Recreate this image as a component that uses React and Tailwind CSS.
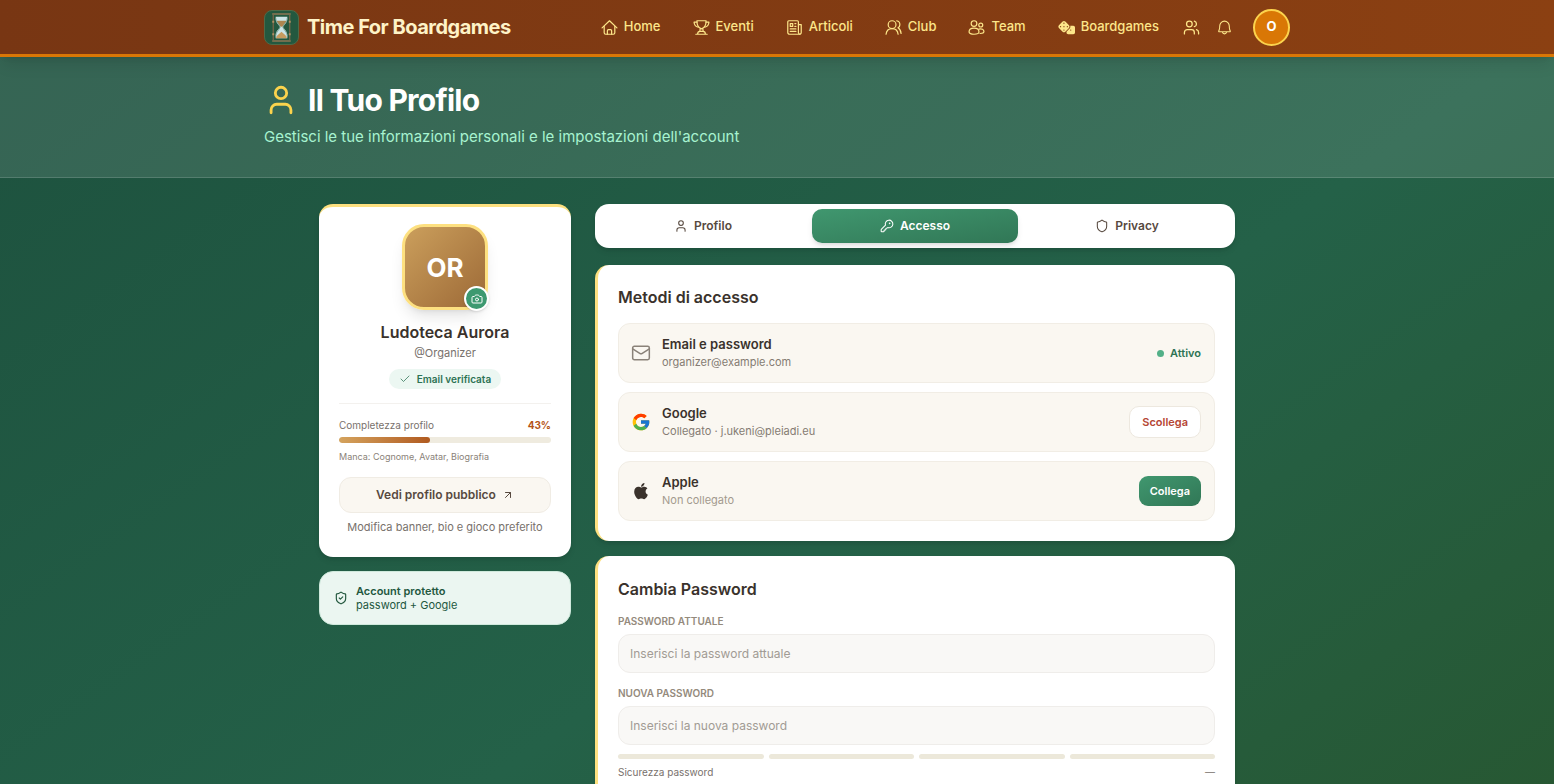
import { useState } from "react";
import {
  ArrowUpRight,
  Camera,
  Check,
  KeyRound,
  Mail,
  Shield,
  ShieldCheck,
  User,
  Users,
} from "lucide-react";
import { AiFillApple } from "react-icons/ai";
import { FaDice } from "react-icons/fa6";
import { FcGoogle } from "react-icons/fc";
import { PiBell } from "react-icons/pi";

function NavIcon({ children }) {
  return (
    <svg
      viewBox="0 0 24 24"
      className="size-[17px]"
      fill="none"
      stroke="currentColor"
      strokeWidth="1.7"
      strokeLinecap="round"
      strokeLinejoin="round"
    >
      {children}
    </svg>
  );
}

function HomeIcon() {
  return (
    <NavIcon>
      <path d="M1.500 12.500 12 2.500l10.500 10" />
      <path d="M4.500 10.500v9a2 2 0 0 0 2 2h11a2 2 0 0 0 2-2v-9" />
      <path d="M9 21.500v-5a1.500 1.500 0 0 1 1.500-1.500h3a1.500 1.500 0 0 1 1.500 1.500v5" />
    </NavIcon>
  );
}

function TrophyIcon() {
  return (
    <NavIcon>
      <path d="M5.500 2.500h13c0 5.500-2 10-6.500 11.500-4.500-1.500-6.500-6-6.500-11.500z" />
      <path d="M5.500 4.500h-4c.3 4 2.300 6.300 6 7M18.500 4.500h4c-.3 4-2.300 6.300-6 7" />
      <path d="M10.300 13.500 9.500 17.500M13.700 13.500l.8 4M6.500 21.500c0-2.500 1.300-4 3.500-4h4c2.200 0 3.500 1.500 3.500 4M4 21.500h16" />
    </NavIcon>
  );
}

function ArticlesIcon() {
  return (
    <NavIcon>
      <path d="M17.500 8V4a1.500 1.500 0 0 0-1.500-1.500H4A1.500 1.500 0 0 0 2.500 4v15A2.500 2.500 0 0 0 5 21.500h14a2.500 2.500 0 0 0 2.500-2.500V8z" />
      <path d="M17.500 8v11a2.500 2.500 0 0 0 2 2.500M6 6.500h3.500v4H6zM12.500 6.500H14M12.500 10.500H14M6 14h8M6 17.500h8" />
    </NavIcon>
  );
}

function ClubIcon() {
  return (
    <NavIcon>
      <circle cx="10" cy="8" r="5.500" />
      <path d="M1.500 21.500c.5-5 3.500-8 8.500-8s8 3 8.500 8" />
      <path d="M16.500 2.500c2.800.5 4.500 2.500 4.500 5.500 0 2-1 3.500-2.600 4.500 2.500 1.500 4 4.500 4.300 8" />
    </NavIcon>
  );
}

function TeamIcon() {
  return (
    <NavIcon>
      <circle cx="8.500" cy="6.500" r="4" />
      <circle cx="18" cy="8.500" r="2.800" />
      <path d="M1.500 18.500c0-3.500 3-5.500 7-5.500s7 2 7 5.500c0 1.800-3 3-7 3s-7-1.200-7-3z" />
      <path d="M15.500 14.200c4-1 7 .8 7 3.600 0 1.700-2 2.700-5.500 2.700" />
    </NavIcon>
  );
}

function HourglassLogo() {
  return (
    <svg viewBox="0 0 34 34" className="size-[35px] rounded-lg border border-[#4e6a48] bg-[#23583f]">
      <path d="M11 6h12v2c0 4-3 6-4.500 8.500C20 19 23 21 23 25v3H11v-3c0-4 3-6 4.500-8.500C14 14 11 12 11 8z" fill="#cbe4e6" />
      <path d="M12 10h10c-.6 2.500-3 4.500-4.300 6.300h-1.400C15 14.500 12.600 12.500 12 10z" fill="#ad8650" />
      <path d="M11.500 28c0-2.500 3.500-4.500 5.500-6.500 2 2 5.500 4 5.500 6.500z" fill="#c69b5f" />
      <path d="M11 7c0 5 4 6.500 4.600 9.500C15 19.500 11 21 11 27M23 7c0 5-4 6.500-4.600 9.500.6 3 4.600 4.500 4.600 10.500" fill="none" stroke="#719a8c" strokeWidth=".8" />
      <path d="M8.500 4v26M25.500 4v26" stroke="#79664a" strokeWidth="1.300" />
      <path d="M7.500 11h2M7.500 24h2M24.500 11h2M24.500 24h2" stroke="#b18f63" strokeWidth="2" />
      <path d="M8 3h18M8 31h18" stroke="#8d7654" strokeWidth="1.600" strokeLinecap="round" />
    </svg>
  );
}

const NAV = [
  { label: "Home", icon: <HomeIcon /> },
  { label: "Eventi", icon: <TrophyIcon /> },
  { label: "Articoli", icon: <ArticlesIcon /> },
  { label: "Club", icon: <ClubIcon /> },
  { label: "Team", icon: <TeamIcon /> },
  { label: "Boardgames", icon: <FaDice className="size-[17px]" /> },
];

const TABS = [
  { id: "profilo", label: "Profilo", Icon: User },
  { id: "accesso", label: "Accesso", Icon: KeyRound },
  { id: "privacy", label: "Privacy", Icon: Shield },
];

function Header() {
  return (
    <header className="relative border-b-3 border-[#d97706] bg-linear-to-r from-[#783613] to-[#8b4012] text-[#fde68a] shadow-lg">
      <div className="mx-auto flex h-[54px] max-w-[1026px] items-center justify-between">
        <a href="#home" className="flex items-center gap-2 text-xl font-bold tracking-tight text-[#fef3c7]">
          <HourglassLogo />
          Time For Boardgames
        </a>
        <div className="flex items-center">
          <nav className="flex items-center gap-8 text-[13px] font-medium">
            {NAV.map((item) => (
              <a key={item.label} href={`#${item.label.toLowerCase()}`} className="flex items-center gap-1.5">
                {item.icon}
                {item.label}
              </a>
            ))}
          </nav>
          <button type="button" aria-label="Amici" className="ml-6">
            <Users className="size-[17px]" strokeWidth={1.8} />
          </button>
          <button type="button" aria-label="Notifiche" className="ml-4">
            <PiBell className="size-[17px]" />
          </button>
          <button
            type="button"
            aria-label="Account"
            className="ml-5 size-[37px] rounded-full border-2 border-[#fcd34d] bg-[#d97706] text-[13px] font-bold text-white"
          >
            O
          </button>
        </div>
      </div>
    </header>
  );
}

function ProfileCard() {
  return (
    <section className="rounded-[14px] border-t-3 border-[#fde080] bg-white px-5 pt-[17px] pb-[22px] shadow-md">
      <div className="flex flex-col items-center">
        <div className="relative flex size-[86px] items-center justify-center rounded-[22px] border-3 border-[#fde080] bg-linear-to-br from-[#cb9f5c] to-[#9d6a37] text-[26px] font-bold text-white shadow-lg">
          OR
          <button
            type="button"
            aria-label="Cambia avatar"
            className="absolute -right-1 -bottom-1 flex size-[25px] items-center justify-center rounded-full border-2 border-white bg-[#3d9970] shadow-sm"
          >
            <Camera className="size-3" />
          </button>
        </div>
        <h2 className="mt-3 text-base leading-5 font-semibold text-[#3a322c]">Ludoteca Aurora</h2>
        <p className="mt-[3px] text-[11px] leading-4 text-[#78716c]">@Organizer</p>
        <span className="mt-2 flex h-5 items-center gap-1.5 rounded-full bg-[#ecf7f2] px-2.5 text-[10px] font-semibold text-[#2d7354]">
          <Check className="size-3" strokeWidth={1.5} />
          Email verificata
        </span>
      </div>
      <div className="mt-3.5 border-t border-[#f3f1ee] pt-[13px]">
        <div className="flex justify-between text-[10px] leading-4 text-[#78716c]">
          <span>Completezza profilo</span>
          <span className="font-bold text-[#b45315]">43%</span>
        </div>
        <div className="mt-1 h-1.5 overflow-hidden rounded-full bg-[#efebdf]">
          <div className="h-full w-[43%] rounded-full bg-linear-to-r from-[#d4a35d] to-[#b05a1f]" />
        </div>
        <p className="mt-1.5 text-[9px] leading-4 text-[#8a8279]">Manca: Cognome, Avatar, Biografia</p>
        <a
          href="#pubblico"
          className="mt-3 flex h-9 items-center justify-center gap-1.5 rounded-xl border border-[#f0ece4] bg-[#faf7f1] text-xs font-semibold text-[#57493f]"
        >
          Vedi profilo pubblico
          <ArrowUpRight className="size-3" />
        </a>
        <p className="mt-1.5 text-center text-[11px] leading-4 text-[#78716c]">
          Modifica banner, bio e gioco preferito
        </p>
      </div>
    </section>
  );
}

function MethodRow({ icon, title, detail, muted, children }) {
  return (
    <li className="flex h-[60px] items-center gap-[11px] rounded-xl border border-[#f1ede5] bg-[#faf7f1] pr-[13px] pl-3">
      {icon}
      <div className="flex-1 pt-0.5">
        <h3 className="text-[13px] leading-4 font-semibold text-[#3a322c]">{title}</h3>
        <p className={muted ? "text-[11px] leading-5 text-[#a39a8e]" : "text-[11px] leading-5 text-[#857c73]"}>
          {detail}
        </p>
      </div>
      {children}
    </li>
  );
}

function PasswordField({ id, label, placeholder }) {
  return (
    <div>
      <label htmlFor={id} className="block text-[10px] leading-4 font-semibold text-[#948a7c] uppercase">
        {label}
      </label>
      <input
        id={id}
        type="password"
        placeholder={placeholder}
        className="mt-[5px] block h-[39px] w-full rounded-xl border border-[#efedea] bg-[#f9f8f6] px-[11px] text-xs placeholder:text-[#a19b94]"
      />
    </div>
  );
}

function App() {
  const [tab, setTab] = useState("accesso");

  return (
    <div className="h-screen overflow-hidden bg-linear-[145deg] from-[#1d513e] via-[#246148] via-60% to-[#275833] font-[Inter,sans-serif]">
      <Header />
      <div className="border-b border-white/15 bg-white/11">
        <div className="mx-auto h-[120px] max-w-[1026px] pt-[23px]">
          <h1 className="flex items-center gap-2.5 text-[30px] leading-10 font-bold tracking-tight text-white">
            <User className="size-[34px] text-[#fcd34d]" />
            Il Tuo Profilo
          </h1>
          <p className="mt-[5px] text-[15px] leading-6 text-[#a7f3d0]">
            Gestisci le tue informazioni personali e le impostazioni dell&apos;account
          </p>
        </div>
      </div>

      <main className="mx-auto grid max-w-[916px] grid-cols-[252px_1fr] items-start gap-6 pt-[26px]">
        <aside className="space-y-3.5">
          <ProfileCard />
          <div className="flex items-center gap-2 rounded-[14px] border border-[#cfe9dc] bg-[#ebf6f1] px-3.5 py-3 text-[11px] leading-3.5 text-[#23583f]">
            <ShieldCheck className="size-3.5" />
            <div>
              <p className="font-semibold">Account protetto</p>
              <p>password + Google</p>
            </div>
          </div>
        </aside>

        <div className="min-w-0">
          <div role="tablist" className="grid grid-cols-3 gap-1.5 rounded-[14px] bg-white p-[5px] shadow-md">
            {TABS.map(({ id, label, Icon }) => (
              <button
                key={id}
                type="button"
                role="tab"
                aria-selected={tab === id}
                onClick={() => setTab(id)}
                className={
                  tab === id
                    ? "flex h-[34px] items-center justify-center gap-1.5 rounded-[10px] bg-linear-to-br from-[#40976f] to-[#317756] text-xs font-semibold text-white shadow-md"
                    : "flex h-[34px] items-center justify-center gap-1.5 rounded-[10px] text-xs font-semibold text-[#57493f]"
                }
              >
                <Icon className="size-3.5" strokeWidth={1.8} />
                {label}
              </button>
            ))}
          </div>

          <section className="mt-[17px] rounded-[14px] border-l-3 border-[#fde080] bg-white px-5 pt-[22px] pb-5 shadow-md">
            <h2 className="text-base leading-5 font-semibold text-[#3a322c]">Metodi di accesso</h2>
            <ul className="mt-4 space-y-[9px]">
              <MethodRow
                icon={<Mail className="size-5 text-[#8a8279]" strokeWidth={1.8} />}
                title="Email e password"
                detail="organizer@example.com"
              >
                <span className="flex items-center gap-1.5 text-[11px] font-semibold text-[#2d7354]">
                  <span className="size-[7px] rounded-full bg-[#52b088]" />
                  Attivo
                </span>
              </MethodRow>
              <MethodRow
                icon={<FcGoogle className="size-5" />}
                title="Google"
                detail="Collegato · j.ukeni@pleiadi.eu"
              >
                <button
                  type="button"
                  className="h-8 rounded-[10px] border border-[#ede8df] bg-white px-3 text-[11px] font-semibold text-[#b54634]"
                >
                  Scollega
                </button>
              </MethodRow>
              <MethodRow
                icon={<AiFillApple className="size-5 text-[#3a322c]" />}
                title="Apple"
                detail="Non collegato"
                muted
              >
                <button
                  type="button"
                  className="h-[30px] rounded-[9px] bg-linear-to-br from-[#40976f] to-[#317756] px-[11px] text-[11px] font-semibold text-white"
                >
                  Collega
                </button>
              </MethodRow>
            </ul>
          </section>

          <section className="mt-[15px] rounded-[14px] border-l-3 border-[#fde080] bg-white px-5 pt-[23px] pb-6 shadow-md">
            <h2 className="text-base leading-5 font-semibold text-[#3a322c]">Cambia Password</h2>
            <form className="mt-3.5 space-y-3">
              <PasswordField
                id="current-password"
                label="Password attuale"
                placeholder="Inserisci la password attuale"
              />
              <PasswordField id="new-password" label="Nuova password" placeholder="Inserisci la nuova password" />
            </form>
            <div className="mt-[9px] grid grid-cols-4 gap-[5px]">
              {[0, 1, 2, 3].map((step) => (
                <span key={step} className="h-[5px] rounded-full bg-[#ece8da]" />
              ))}
            </div>
            <div className="mt-[5px] flex justify-between text-[10px] leading-4 text-[#78716c]">
              <span>Sicurezza password</span>
              <span>—</span>
            </div>
          </section>
        </div>
      </main>
    </div>
  );
}

export default App;
